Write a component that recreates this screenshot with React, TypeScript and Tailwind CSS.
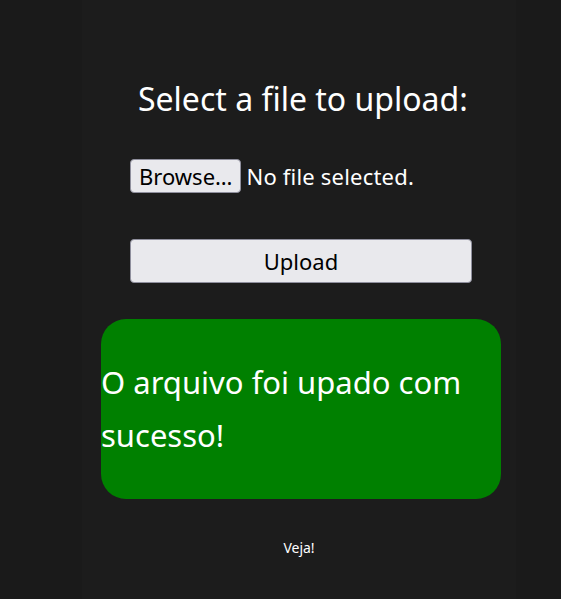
export default function App() {
  return (
    <div className="min-h-[599px] bg-[#1a1a1a] font-['Noto_Sans','Open_Sans',sans-serif] text-white">
      <div className="ml-[82px] w-[434px] min-h-[599px] bg-[#1c1c1c] flex flex-col">
        {/* Form */}
        <h1 className="mt-[77px] pl-[56px] text-[32px] leading-[44px]">Select a file to upload:</h1>
        <div className="mt-[38px] pl-[48px] flex items-center gap-[5px] text-[22px]">
          <button className="h-[34px] px-[8px] bg-[#e9e9ed] text-black border border-[#8f8f9d] rounded-[4px] leading-none">
            Browse…
          </button>
          <span className="tracking-[0.2px]">No file selected.</span>
        </div>
        <button className="mt-[46px] ml-[48px] w-[342px] h-[44px] bg-[#e9e9ed] text-black border border-[#8f8f9d] rounded-[4px] text-[22px]">
          Upload
        </button>

        {/* Result */}
        <div className="mt-[36px] ml-[19px] w-[400px] h-[180px] rounded-[25px] bg-[#008000] flex items-center">
          <p className="text-[31px] leading-[53px]">O arquivo foi upado com sucesso!</p>
        </div>

        <p className="mt-[38px] text-center text-[14px]">Veja!</p>
      </div>
    </div>
  )
}
